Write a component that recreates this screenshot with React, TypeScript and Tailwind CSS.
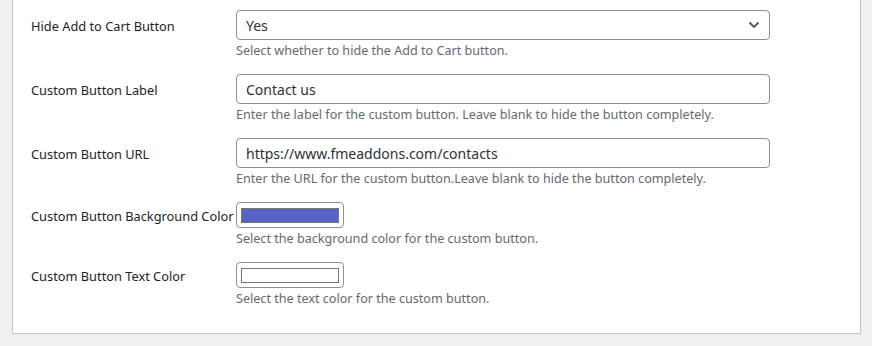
import { ReactNode } from 'react';

const font = { fontFamily: '"Noto Sans", "Open Sans", sans-serif' };

function Row({ label, children, help, small }: { label: string; children: ReactNode; help: string; small?: boolean }) {
  return (
    <div className="flex pb-[14px]">
      <div
        className={`w-[223px] shrink-0 pl-[18px] text-[12.8px] text-[#1d2327] leading-[18px] flex items-center whitespace-nowrap ${
          small ? 'h-[27px]' : 'h-[31px]'
        }`}
      >
        {label}
      </div>
      <div className="flex flex-col">
        {children}
        <p className="mt-[2px] text-[12.6px] leading-[18px] text-[#646970]">{help}</p>
      </div>
    </div>
  );
}

function TextBox({ value, chevron }: { value: string; chevron?: boolean }) {
  return (
    <div className="w-[534px] h-[30px] border border-[#8c8f94] rounded-[4px] bg-white flex items-center justify-between pl-[9px] pr-[8px] text-[14px] text-[#2c3338]">
      <span>{value}</span>
      {chevron && (
        <svg width="12" height="8" viewBox="0 0 12 8" className="mr-[1px]">
          <path d="M1.5 1.5 L6 6 L10.5 1.5" fill="none" stroke="#50575e" strokeWidth="1.8" />
        </svg>
      )}
    </div>
  );
}

function ColorBox({ color }: { color: string }) {
  return (
    <div className="w-[108px] h-[26px] border border-[#8c8f94] rounded-[4px] bg-white flex items-center px-[4px]">
      <div className="w-[98px] h-[15px] border border-[#767676]" style={{ backgroundColor: color }} />
    </div>
  );
}

export default function App() {
  return (
    <div className="w-[872px] h-[346px] bg-[#f0f0f1] overflow-hidden" style={font}>
      <div className="ml-[12px] w-[849px] bg-white border-x border-b border-[#c3c4c7] pt-[10px] pb-[11px]">
        <Row label="Hide Add to Cart Button" help="Select whether to hide the Add to Cart button.">
          <TextBox value="Yes" chevron />
        </Row>
        <Row label="Custom Button Label" help="Enter the label for the custom button. Leave blank to hide the button completely.">
          <TextBox value="Contact us" />
        </Row>
        <Row label="Custom Button URL" help="Enter the URL for the custom button.Leave blank to hide the button completely.">
          <TextBox value="https://www.fmeaddons.com/contacts" />
        </Row>
        <Row small label="Custom Button Background Color" help="Select the background color for the custom button.">
          <ColorBox color="#5763c4" />
        </Row>
        <Row small label="Custom Button Text Color" help="Select the text color for the custom button.">
          <ColorBox color="#ffffff" />
        </Row>
      </div>
    </div>
  );
}
